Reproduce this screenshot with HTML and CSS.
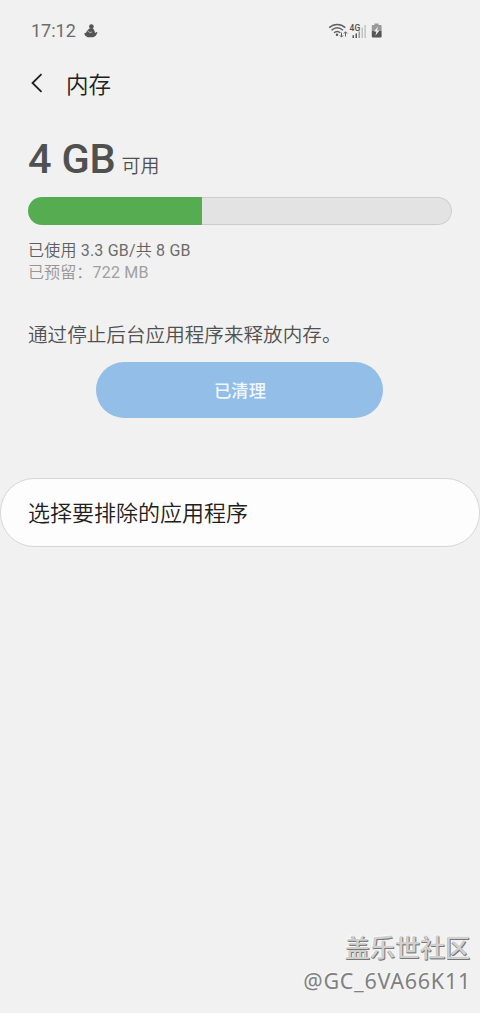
FILE: index.html
```html
<!DOCTYPE html>
<html lang="zh-CN">
<head>
<meta charset="utf-8">
<title>内存</title>
<link rel="stylesheet" href="styles.css">
</head>
<body>
<div class="screen">
  <div class="status">
    <span class="clock">17:12</span>
    <svg class="notice" viewBox="0 0 14 14"><circle cx="7.4" cy="2.6" r="2.3"/><path d="M5.8 4.3h3.2l1.6 2.6.4 2 1.6-.8.9.5-1.7 3.1-2.5 1.6H3.6L1 11.6l-.8-2 2-1.1 1-2z"/><path class="notice-cut" d="M3.4 6.8l2.6 1.8 2-.6"/></svg>
    <svg class="signals" viewBox="0 0 56 18">
      <g class="wifi"><path d="M1.2 5.6C6 1.4 12.5 1.4 17.3 5.6M3.5 8.2c3.5-3 8-3 11.5 0M6 10.8c2-1.7 4.4-1.7 6.3 0"/></g>
      <circle class="dark" cx="9" cy="12.8" r="1.2"/>
      <path class="arrows" d="M13.5 10.5v4.5m-1.7-1.7 1.7 1.8 1.7-1.8M17.5 14.5V9.8m-1.7 1.8 1.7-1.8 1.7 1.8"/>
      <text x="21.6" y="8.7">4G</text>
      <path class="dark" d="M24.5 13.2H26V16h-1.5zM27.5 11.5H29V16h-1.5z"/>
      <path class="mid" d="M30.5 9.5H32V16h-1.5z"/>
      <path class="faint" d="M33.5 5.5H35V16h-1.5zM36.4 3h1.5v13h-1.5z"/>
      <path class="battery" d="M46.4 1.5h4.2v1.4h2.2q.8 0 .8.8v5.3H43.8V3.7q0-.8.8-.8h1.8z"/>
      <path class="dark" d="M43.8 9h9.8v5.6q0 1-1 1h-7.8q-1 0-1-1z"/>
      <path class="bolt" d="M50 4.5l-4 5h2.4l-1 4.2 4-5.2H49z"/>
    </svg>
  </div>
  <header class="bar">
    <svg class="back" viewBox="0 0 12 20"><path d="M10.5 1.2 1.5 10l9 8.8"/></svg>
    <h1>内存</h1>
  </header>
  <main>
    <div class="free"><strong>4 GB</strong><span>可用</span></div>
    <div class="meter"><div class="used"></div><div class="rest"></div></div>
    <p class="usage">已使用 <span>3.3 GB/</span>共 <span>8 GB</span></p>
    <p class="reserved">已预留：<span>722 MB</span></p>
    <p class="hint">通过停止后台应用程序来释放内存。</p>
    <button class="clean">已清理</button>
  </main>
  <div class="exclude">选择要排除的应用程序</div>
  <footer class="mark"><div class="community">盖乐世社区</div><div class="user">@GC_6VA66K11</div></footer>
</div>
</body>
</html>
```
FILE: styles.css
```css
* { box-sizing: border-box; }
body { margin: 0; background: #f1f1f1; font-family: Roboto, "Noto Sans CJK SC", sans-serif; color: #505050; }
h1, p { margin: 0; font-weight: 400; }
svg { display: block; }
.screen { width: 480px; height: 1013px; display: flex; flex-direction: column; overflow: hidden; }
.status { height: 60px; padding: 20px 96px 0 31px; display: flex; align-items: flex-start; }
.clock { font-size: 18px; line-height: 22px; color: #6c6c6c; width: 45px; white-space: nowrap; }
.notice { width: 14px; height: 14px; margin: 4px 0 0 8px; fill: #555; }
.notice-cut { fill: none; stroke: #f1f1f1; stroke-width: .6; }
.signals { width: 56px; height: 18px; margin: 2px 0 0 auto; }
.wifi { fill: none; stroke: #606060; stroke-width: 1.5; }
.arrows { fill: none; stroke: #606060; stroke-width: 1; }
.signals text { font: 500 8.5px Roboto, sans-serif; fill: #505050; }
.dark { fill: #555; }
.mid { fill: #999; }
.faint { fill: #c2c2c2; }
.battery { fill: #999; }
.bolt { fill: #f1f1f1; }
.bar { height: 48px; padding-left: 31px; display: flex; align-items: center; }
.back { width: 12px; height: 20px; margin-top: -2px; fill: none; stroke: #202020; stroke-width: 1.8; }
.bar h1 { margin-left: 23px; padding-top: 1px; font-size: 22.5px; line-height: 32px; font-weight: 350; color: #202020; }
main { padding: 28px 28px 0; display: flex; flex-direction: column; }
.free { height: 61px; display: flex; align-items: baseline; line-height: 45px; white-space: nowrap; }
.free strong { font-size: 41.5px; font-weight: 500; letter-spacing: -.2px; }
.free span { font-size: 19px; font-weight: 350; margin-left: 6px; }
.meter { height: 28px; border-radius: 14px; overflow: hidden; display: flex; }
.used { width: 174px; background: #56ac51; }
.rest { flex: 1; border: 1px solid #cbcbcb; border-left: 0; border-radius: 0 14px 14px 0; background: #e3e3e3; }
.usage { margin-top: 15px; font-size: 16px; line-height: 22px; letter-spacing: .2px; font-weight: 350; color: #606060; }
.reserved { font-size: 16px; line-height: 22px; letter-spacing: .1px; font-weight: 350; color: #969696; }
.usage span, .reserved span { font-weight: 400; color: #6c6c6c; }
.reserved span { color: #a0a0a0; letter-spacing: .25px; }
.hint { margin-top: 38px; font-size: 19.6px; line-height: 28px; font-weight: 350; white-space: nowrap; }
.clean { width: 287px; height: 56px; margin: 12px 0 0 68px; padding: 0 0 1px 1px; border: 0; border-radius: 28px; background: #92bee8; color: #f1f7fd; font: 500 17.3px Roboto, "Noto Sans CJK SC", sans-serif; }
.exclude { height: 69px; margin-top: 60px; padding: 1px 0 0 27px; border: 1px solid #d6d6d6; border-radius: 34px; background: #fdfdfd; color: #202020; font-size: 22px; font-weight: 350; line-height: 67px; }
.mark { margin-top: auto; height: 82px; padding-right: 10px; text-align: right; white-space: nowrap; }
.community { font-size: 25px; line-height: 36px; font-weight: 500; color: #d0d0d0; text-shadow: 1px 1px 0 #777, 0 1px 0 #888, -1px -1px 0 #faf9f6; }
.user { font: 21.5px/28px "Noto Sans", sans-serif; letter-spacing: .75px; margin-right: -1px; color: #808080; text-shadow: -1px -1px 0 #fbfaf7; }
```
